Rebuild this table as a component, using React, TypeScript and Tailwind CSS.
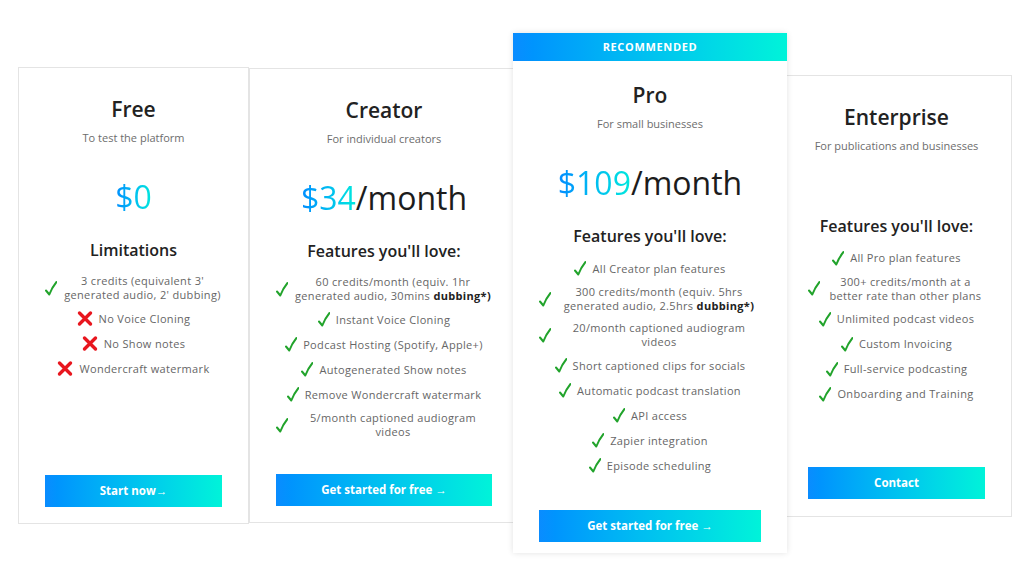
import type { ReactNode } from 'react';

type Feature = { text: ReactNode; ok: boolean };

type Plan = {
  name: string;
  tagline: string;
  price?: string;
  heading: string;
  features: Feature[];
  cta: string;
  width: string;
  height: string;
  pro?: boolean;
};

const FONT = { fontFamily: '"Open Sans", "Liberation Sans", sans-serif' };

const PLANS: Plan[] = [
  {
    name: 'Free',
    tagline: 'To test the platform',
    price: '$0',
    heading: 'Limitations',
    features: [
      { text: "3 credits (equivalent 3' generated audio, 2' dubbing)", ok: true },
      { text: 'No Voice Cloning', ok: false },
      { text: 'No Show notes', ok: false },
      { text: 'Wondercraft watermark', ok: false },
    ],
    cta: 'Start now→',
    width: 'w-[231px]',
    height: 'h-[457px] pb-[16px]',
  },
  {
    name: 'Creator',
    tagline: 'For individual creators',
    price: '$34',
    heading: "Features you'll love:",
    features: [
      {
        text: (
          <>
            60 credits/month (equiv. 1hr generated audio, 30mins{' '}
            <b className="inline-block leading-[14px] font-bold text-[#222]">dubbing*)</b>
          </>
        ),
        ok: true,
      },
      { text: 'Instant Voice Cloning', ok: true },
      { text: 'Podcast Hosting (Spotify, Apple+)', ok: true },
      { text: 'Autogenerated Show notes', ok: true },
      { text: 'Remove Wondercraft watermark', ok: true },
      { text: '5/month captioned audiogram videos', ok: true },
    ],
    cta: 'Get started for free →',
    width: 'w-[270px]',
    height: 'h-[455px] pb-[16px]',
  },
  {
    name: 'Pro',
    tagline: 'For small businesses',
    price: '$109',
    heading: "Features you'll love:",
    features: [
      { text: 'All Creator plan features', ok: true },
      {
        text: (
          <>
            300 credits/month (equiv. 5hrs generated audio, 2.5hrs{' '}
            <b className="inline-block leading-[14px] font-bold text-[#222]">dubbing*)</b>
          </>
        ),
        ok: true,
      },
      { text: '20/month captioned audiogram videos', ok: true },
      { text: 'Short captioned clips for socials', ok: true },
      { text: 'Automatic podcast translation', ok: true },
      { text: 'API access', ok: true },
      { text: 'Zapier integration', ok: true },
      { text: 'Episode scheduling', ok: true },
    ],
    cta: 'Get started for free →',
    width: 'w-[274px]',
    height: 'h-[520px] pb-[11px]',
    pro: true,
  },
  {
    name: 'Enterprise',
    tagline: 'For publications and businesses',
    heading: "Features you'll love:",
    features: [
      { text: 'All Pro plan features', ok: true },
      { text: '300+ credits/month at a better rate than other plans', ok: true },
      { text: 'Unlimited podcast videos', ok: true },
      { text: 'Custom Invoicing', ok: true },
      { text: 'Full-service podcasting', ok: true },
      { text: 'Onboarding and Training', ok: true },
    ],
    cta: 'Contact',
    width: 'w-[231px]',
    height: 'h-[442px] pb-[17px]',
  },
];

function Check() {
  return (
    <svg width="12" height="17" viewBox="0 0 12 17" className="shrink-0">
      <path d="M1 10.5 L4.3 14.5 Q7 7.5 11.5 2" fill="none" stroke="#21a32b" strokeWidth="2" strokeLinecap="round" strokeLinejoin="round" />
    </svg>
  );
}

function Cross() {
  return (
    <svg width="16" height="17" viewBox="0 0 16 17" className="shrink-0">
      <path d="M2.5 3 L13.5 14 M13.5 3 L2.5 14" stroke="#e8161e" strokeWidth="3.4" strokeLinecap="round" />
    </svg>
  );
}

function PlanCard({ plan }: { plan: Plan }) {
  return (
    <div
      className={`${plan.width} ${plan.height} flex shrink-0 flex-col bg-white text-center ${
        plan.pro
          ? 'relative z-10 -mx-[6px] mb-[5px] shadow-[0_0_6px_rgba(0,0,0,0.12)]'
          : 'border border-[#e4e4e4]'
      }`}
    >
      {plan.pro && (
        <div className="flex h-[28px] items-center justify-center bg-linear-to-r from-[#0a8cff] to-[#00f3d9] text-[11px] font-bold tracking-[0.06em] text-white">
          RECOMMENDED
        </div>
      )}
      <div className={`flex flex-1 flex-col px-[26px] ${plan.pro ? 'pt-[21px]' : 'pt-[28px]'}`}>
        <h2 className="text-[21px] leading-[26px] font-semibold text-[#222]">{plan.name}</h2>
        <p className="mt-[8px] text-[11px] leading-[16px] text-[#6d6d6d]">{plan.tagline}</p>
        {plan.price && (
          <div className="mt-[33px] text-[32px] leading-[36px] font-medium text-[#1c1c1c]">
            <span className="bg-linear-to-r from-[#0a8cff] to-[#00e8dc] bg-clip-text text-transparent">{plan.price}</span>
            {plan.name !== 'Free' && '/month'}
          </div>
        )}
        <h3
          className={`${plan.price ? 'mt-[24px]' : 'mt-[61px]'} text-[16px] leading-[22px] font-semibold text-[#222]`}
        >
          {plan.heading}
        </h3>
        <ul className="mt-[13px] flex flex-col gap-[8px]">
          {plan.features.map((f, i) => (
            <li key={i} className="flex items-center justify-center gap-[6px]">
              {f.ok ? <Check /> : <Cross />}
              <span className="text-[11px] leading-[14px] tracking-[0.03em] text-[#666]">{f.text}</span>
            </li>
          ))}
        </ul>
        <button className="mt-auto h-[32px] w-full bg-linear-to-r from-[#0a8cff] to-[#00f3d9] text-[11.5px] font-bold text-white">
          {plan.cta}
        </button>
      </div>
    </div>
  );
}

export default function App() {
  return (
    <div style={FONT} className="flex h-[577px] items-center overflow-hidden bg-white pt-[14px] pl-[18px]">
      {PLANS.map((p) => (
        <PlanCard key={p.name} plan={p} />
      ))}
    </div>
  );
}
